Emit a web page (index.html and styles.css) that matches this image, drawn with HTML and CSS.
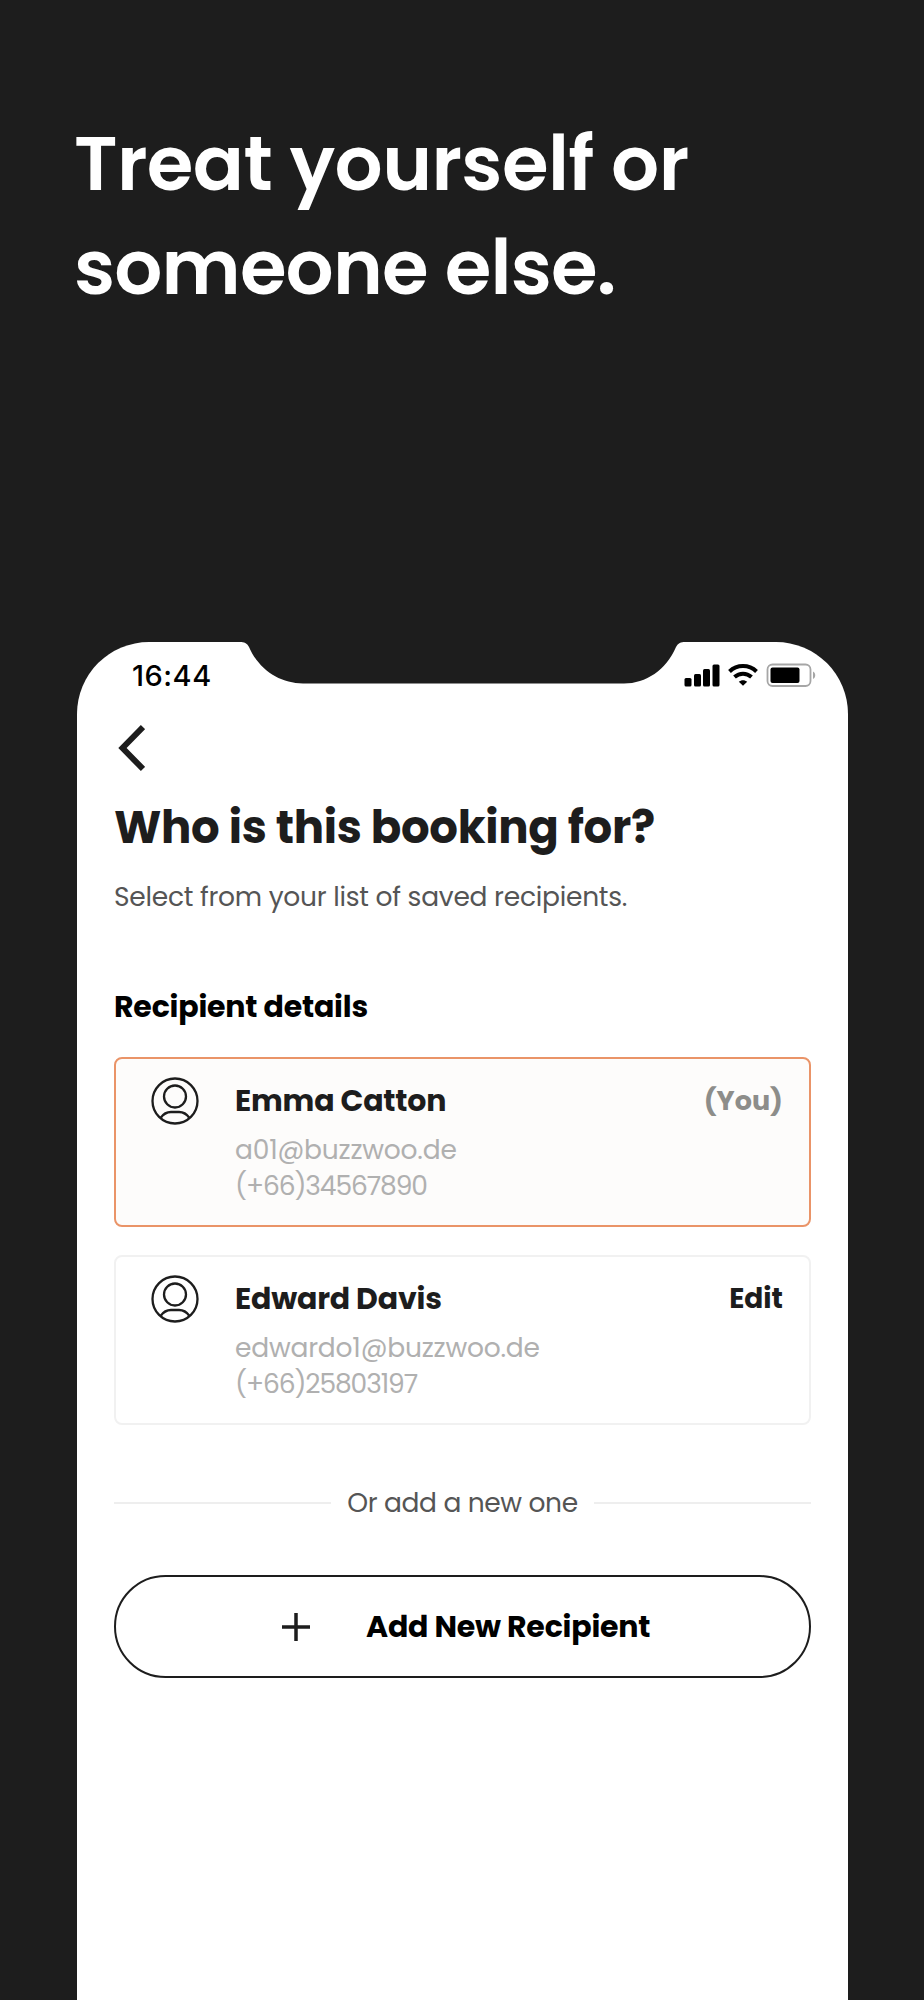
FILE: index.html
```
<!DOCTYPE html>
<html lang="en">
<head>
    <meta charset="UTF-8">
    <meta name="viewport" content="width=device-width, initial-scale=1.0">
    <title>Who is this booking for?</title>
    <link rel="stylesheet" href="styles.css">
</head>
<body>
    <h1 class="headline">Treat yourself or<br><span>someone else.</span></h1>

    <div class="phone">
        <svg class="notch" width="450" height="42" viewBox="0 0 450 42">
            <path d="M0 0 H2 C6 0 9 1 11 5 C21 28 42 41.5 65 41.5 H386 C408 41.5 428 28 438 5 C440 1 443 0 447 0 H450 V-1 H0 Z" fill="#1d1d1d"/>
        </svg>

        <div class="status-bar">
            <span class="time">16:44</span>
            <svg class="status-icons" width="134" height="26" viewBox="0 0 134 26">
                <rect x="1.5" y="15" width="7" height="8.5" rx="1.5"/>
                <rect x="11" y="11" width="7" height="12.5" rx="1.5"/>
                <rect x="20" y="6" width="7" height="17.5" rx="1.5"/>
                <rect x="29.5" y="1.5" width="7" height="22" rx="1.5"/>
                <g fill="none" stroke="#000" stroke-width="4">
                    <path d="M46.5 8.5 C54 1.3 66 1.3 73.5 8.5"/>
                    <path d="M51.5 14 C56.5 9.5 63.5 9.5 68.5 14"/>
                </g>
                <path d="M60 22.8 L55.8 18.8 C58 16.6 62 16.6 64.2 18.8 Z"/>
                <rect x="84.5" y="1.5" width="43" height="21.5" rx="5" fill="none" stroke="#a6a6a6" stroke-width="1.8"/>
                <rect x="87.5" y="4.5" width="29" height="15.5" rx="2"/>
                <path d="M130 8.5 C133 10 133 14.5 130 16 Z" fill="#a6a6a6"/>
            </svg>
        </div>

        <div class="content">
            <svg class="back" width="30" height="48" viewBox="0 0 30 48">
                <path d="M28 3 L7.5 24 L28 45" fill="none" stroke="#1d1d1d" stroke-width="6"/>
            </svg>
            <h2 class="title">Who is this booking for?</h2>
            <p class="subtitle">Select from your list of saved recipients.</p>

            <h3 class="section">Recipient details</h3>

            <div class="card selected">
                <svg class="avatar" width="48" height="48" viewBox="0 0 48 48">
                    <circle cx="24" cy="24" r="22.5"/>
                    <circle cx="24" cy="19.5" r="11"/>
                    <path d="M9.5 41 C13 36 17 35 20 35 H28 C31 35 35 36 38.5 41"/>
                </svg>
                <div class="info">
                    <div class="name">Emma Catton</div>
                    <div class="contact">a01@buzzwoo.de</div>
                    <div class="contact phone-number">(+66)34567890</div>
                </div>
                <div class="action you">(You)</div>
            </div>

            <div class="card">
                <svg class="avatar" width="48" height="48" viewBox="0 0 48 48">
                    <circle cx="24" cy="24" r="22.5"/>
                    <circle cx="24" cy="19.5" r="11"/>
                    <path d="M9.5 41 C13 36 17 35 20 35 H28 C31 35 35 36 38.5 41"/>
                </svg>
                <div class="info">
                    <div class="name">Edward Davis</div>
                    <div class="contact">edwardo1@buzzwoo.de</div>
                    <div class="contact phone-number">(+66)25803197</div>
                </div>
                <div class="action">Edit</div>
            </div>

            <div class="divider">Or add a new one</div>

            <button class="add">
                <svg width="28" height="28" viewBox="0 0 28 28">
                    <path d="M14 0 V28 M0 14 H28" stroke="#1d1d1d" stroke-width="3.5"/>
                </svg>
                <span>Add New Recipient</span>
            </button>
        </div>
    </div>
</body>
</html>
```
FILE: styles.css
```
* {
    box-sizing: border-box;
}

body {
    margin: 0;
    height: 2000px;
    overflow: hidden;
    background: #1d1d1d;
    font-family: 'Poppins', 'Inter', sans-serif;
    color: #1d1d1d;
}

h1, h2, h3, p {
    margin: 0;
    white-space: nowrap;
}

.headline {
    height: 642px;
    padding: 112px 0 0 74px;
    font-size: 75.5px;
    font-weight: 600;
    line-height: 104px;
    letter-spacing: -0.6px;
    color: #fff;
}

.headline span {
    letter-spacing: -0.85px;
}

.phone {
    position: relative;
    width: 771px;
    height: 1358px;
    margin-left: 77px;
    background: #fff;
    border-radius: 72px 72px 0 0;
}

.notch {
    position: absolute;
    top: 0;
    left: 161px;
}

.status-bar {
    display: flex;
    justify-content: space-between;
    height: 82px;
    padding: 21px 31px 0 55px;
}

.time {
    font-family: 'Inter', sans-serif;
    font-size: 29px;
    font-weight: 550;
    line-height: 26px;
    letter-spacing: 0.5px;
    color: #000;
}

.content {
    padding: 0 37px;
}

.back {
    display: block;
    margin-left: 1px;
}

.title {
    margin-top: 31px;
    font-size: 45px;
    font-weight: 700;
    line-height: 50px;
    letter-spacing: -0.3px;
}

.subtitle {
    margin-top: 26px;
    font-size: 26.5px;
    line-height: 36px;
    letter-spacing: -0.25px;
    color: #555;
}

.section {
    margin-top: 74px;
    font-size: 30px;
    font-weight: 700;
    line-height: 36px;
    letter-spacing: -0.2px;
    color: #000;
}

/* recipient cards */
.card {
    display: flex;
    height: 170px;
    margin-top: 28px;
    padding: 18px 26px 0 34.5px;
    border: 2px solid #f1f1f1;
    border-radius: 8px;
}

.section + .card {
    margin-top: 32px;
}

.card.selected {
    border-color: #ea9468;
    background: #fdfcfb;
}

.avatar {
    margin-right: 36.5px;
    fill: none;
    stroke: #1d1d1d;
    stroke-width: 2.3;
}

.info {
    flex: 1;
}

.name, .action {
    font-weight: 700;
    line-height: 48px;
}

.name {
    margin-bottom: 7px;
    font-size: 30px;
    letter-spacing: -0.2px;
}

.contact {
    font-size: 26.5px;
    line-height: 36px;
    letter-spacing: -0.2px;
    color: #b0b0b0;
}

.phone-number {
    letter-spacing: -1.1px;
}

.action {
    font-size: 28px;
}

.you {
    font-size: 27px;
    color: #8d8d8a;
}

.divider {
    display: flex;
    align-items: center;
    gap: 16px;
    height: 36px;
    margin-top: 60px;
    font-size: 26.5px;
    letter-spacing: -0.35px;
    color: #555;
}

.divider::before,
.divider::after {
    content: '';
    flex: 1;
    height: 2px;
    background: #eee;
}

.add {
    display: flex;
    align-items: center;
    width: 100%;
    height: 103px;
    margin-top: 54px;
    padding: 0 0 0 166px;
    border: 2px solid #1d1d1d;
    border-radius: 52px;
    background: #fff;
    font: inherit;
    font-size: 30px;
    font-weight: 700;
    letter-spacing: -0.2px;
    color: #000;
}

.add svg {
    margin-right: 56px;
}
```
